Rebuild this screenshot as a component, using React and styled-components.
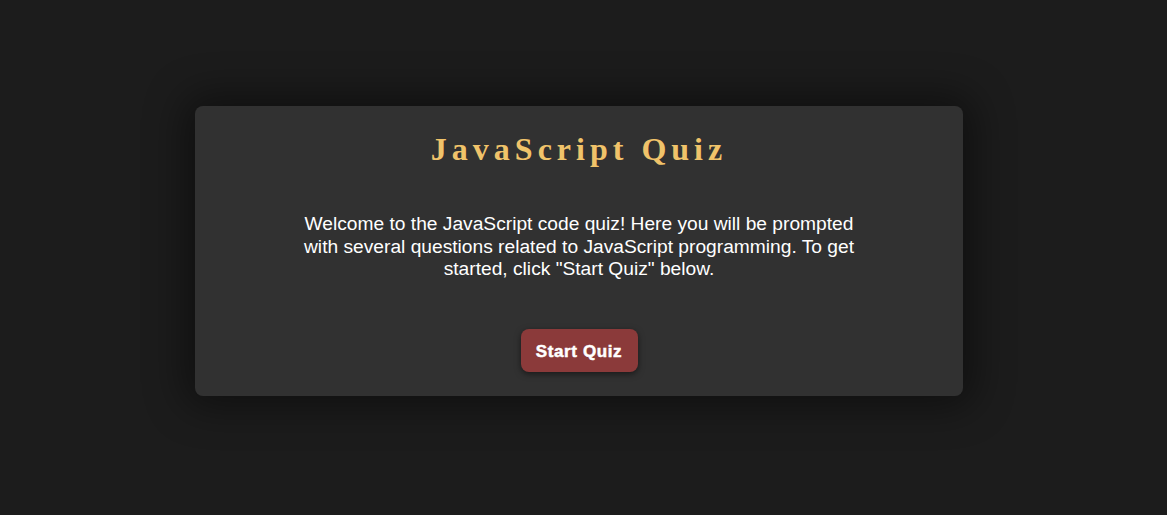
import React from "react";
import styled, { createGlobalStyle } from "styled-components";

const GlobalStyle = createGlobalStyle`
  html, body {
    margin: 0;
    padding: 0;
    background: #1c1c1c;
    font-family: "Liberation Sans", Arial, sans-serif;
  }
`;

const Page = styled.main`
  display: flex;
  justify-content: center;
  min-height: 100vh;
  padding: 106px 9px 0 0;
  box-sizing: border-box;
`;

const Card = styled.section`
  display: flex;
  flex-direction: column;
  align-items: center;
  width: 768px;
  height: 290px;
  box-sizing: border-box;
  padding: 25px 104px 0;
  background: #313131;
  border-radius: 8px;
  box-shadow: 0 0 40px 10px rgba(0, 0, 0, 0.45);
`;

const Title = styled.h1`
  margin: 0;
  font-family: "Liberation Serif", "Times New Roman", serif;
  font-weight: 700;
  font-size: 32px;
  line-height: 37px;
  letter-spacing: 5px;
  color: #f0c36a;
  text-align: center;
`;

const Intro = styled.p`
  margin: 45px 0 0;
  max-width: 560px;
  font-size: 19.2px;
  line-height: 22.5px;
  color: #ffffff;
  text-align: center;
`;

const StartButton = styled.button`
  margin-top: 48px;
  width: 117px;
  height: 43px;
  padding: 4px 0 0;
  border: none;
  border-radius: 8px;
  background: #8b3a3a;
  color: #ffffff;
  font-family: "Liberation Sans", Arial, sans-serif;
  font-weight: 900;
  font-size: 17px;
  letter-spacing: 0.6px;
  -webkit-text-stroke: 0.5px #ffffff;
  box-shadow: 0 2px 6px rgba(0, 0, 0, 0.5);
  cursor: pointer;
`;

export default function App() {
  return (
    <>
      <GlobalStyle />
      <Page>
        <Card>
          <Title>JavaScript Quiz</Title>
          <Intro>
            Welcome to the JavaScript code quiz! Here you will be prompted with
            several questions related to JavaScript programming. To get started,
            click "Start Quiz" below.
          </Intro>
          <StartButton>Start Quiz</StartButton>
        </Card>
      </Page>
    </>
  );
}
